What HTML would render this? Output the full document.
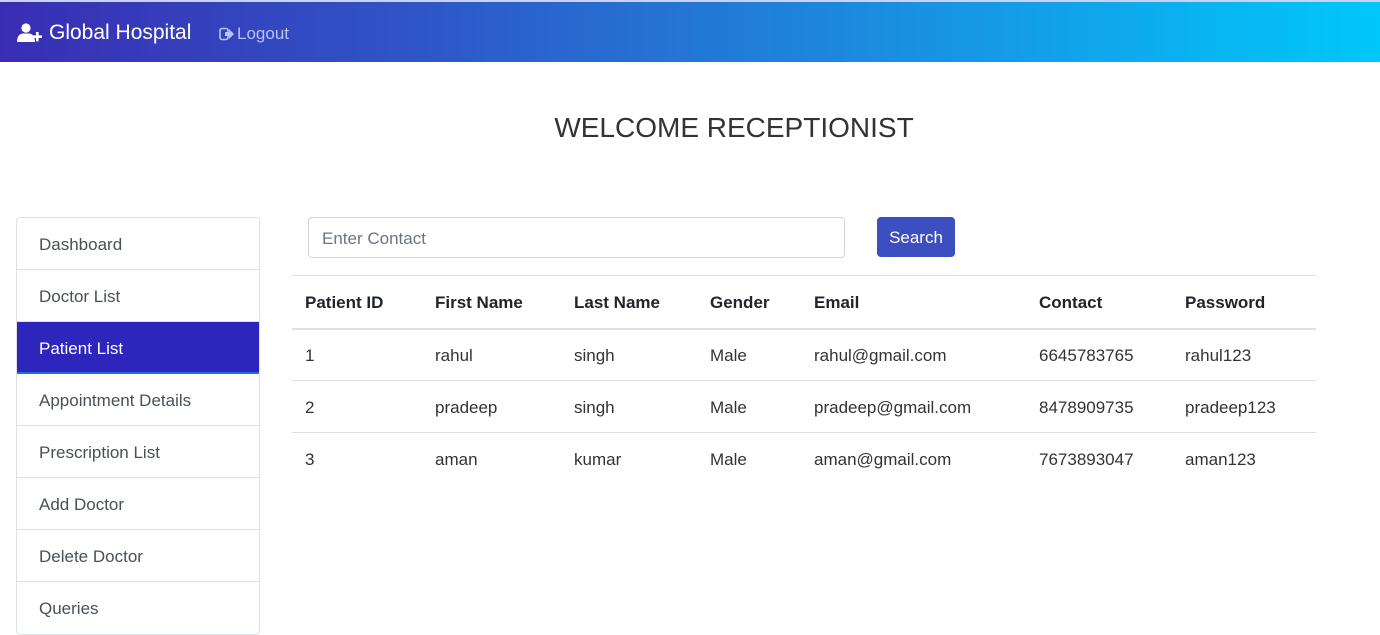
<!DOCTYPE html>
<html><head><meta charset="utf-8"><style>
*{box-sizing:border-box;margin:0;padding:0}
body{width:1380px;height:634px;overflow:hidden;background:#fff;font-family:"Liberation Sans",sans-serif;color:#212529;position:relative}
.nav{position:absolute;left:0;top:0;width:1380px;height:62px;background:linear-gradient(90deg,#3a2db3 0%,#2f55c8 30%,#1a8fe0 65%,#00c8fb 100%);border-top:2px solid #c9d2ee}
.brand{position:absolute;left:17px;top:19px;color:#fff;font-size:21px;display:flex;align-items:center;gap:6px}
.logout{position:absolute;left:219px;top:22px;color:#b9c3f0;font-size:17px;display:flex;align-items:center;gap:2px}
h1{position:absolute;left:0;width:1468px;top:112px;text-align:center;font-weight:400;font-size:28px;color:#333}
.side{position:absolute;left:16px;top:217px;width:244px;border:1px solid #dee2e6;border-radius:4px;overflow:hidden}
.side div{height:52px;line-height:54px;padding-left:22px;font-size:17px;color:#495057;border-bottom:1px solid #dee2e6}
.side div:last-child{border-bottom:none}
.side .act{background:#2e25bd;color:#fff;border-bottom:2px solid #1f6fe0}
.inp{position:absolute;left:308px;top:217px;width:537px;height:41px;border:1px solid #ced4da;border-radius:4px;padding-left:13px;line-height:42px;font-size:17px;color:#6c757d}
.btn{position:absolute;left:877px;top:217px;width:78px;height:40px;background:#3d4fc0;border-radius:4px;color:#fff;font-size:17px;text-align:center;line-height:42px}
table{position:absolute;left:292px;top:275px;width:1024px;border-collapse:collapse;font-size:17px}
th,td{text-align:left;padding:3px 0 0 13px;border-top:1px solid #dee2e6}
th{height:53px;border-bottom:2px solid #dee2e6;font-weight:700}
td{height:52px;color:#333}
</style></head><body>
<div class="nav">
<div class="brand"><svg width="26" height="20" viewBox="0 0 26 20"><circle cx="9" cy="5" r="4.6" fill="#fff"/><path d="M0 19c0-6 3-8.5 6-8.5h6c3 0 6 2.5 6 8.5z" fill="#fff"/><path d="M19 9h2.6v3.4H25V15h-3.4v3.4H19V15h-3.4v-2.6H19z" fill="#fff"/></svg>Global Hospital</div>
<div class="logout"><svg width="16" height="14" viewBox="0 0 16 14"><rect x="1" y="1.5" width="8" height="11" rx="2" fill="none" stroke="#b9c3f0" stroke-width="1.6"/><path d="M6 5h4V2l5 5-5 5V9H6z" fill="#b9c3f0"/></svg>Logout</div>
</div>
<h1>WELCOME RECEPTIONIST</h1>
<div class="side">
<div>Dashboard</div><div>Doctor List</div><div class="act">Patient List</div><div>Appointment Details</div><div>Prescription List</div><div>Add Doctor</div><div>Delete Doctor</div><div>Queries</div>
</div>
<div class="inp">Enter Contact</div>
<div class="btn">Search</div>
<table>
<colgroup><col style="width:130px"><col style="width:139px"><col style="width:136px"><col style="width:104px"><col style="width:225px"><col style="width:146px"><col></colgroup>
<tr><th>Patient ID</th><th>First Name</th><th>Last Name</th><th>Gender</th><th>Email</th><th>Contact</th><th>Password</th></tr>
<tr><td>1</td><td>rahul</td><td>singh</td><td>Male</td><td>rahul@gmail.com</td><td>6645783765</td><td>rahul123</td></tr>
<tr><td>2</td><td>pradeep</td><td>singh</td><td>Male</td><td>pradeep@gmail.com</td><td>8478909735</td><td>pradeep123</td></tr>
<tr><td>3</td><td>aman</td><td>kumar</td><td>Male</td><td>aman@gmail.com</td><td>7673893047</td><td>aman123</td></tr>
</table>
</body></html>
